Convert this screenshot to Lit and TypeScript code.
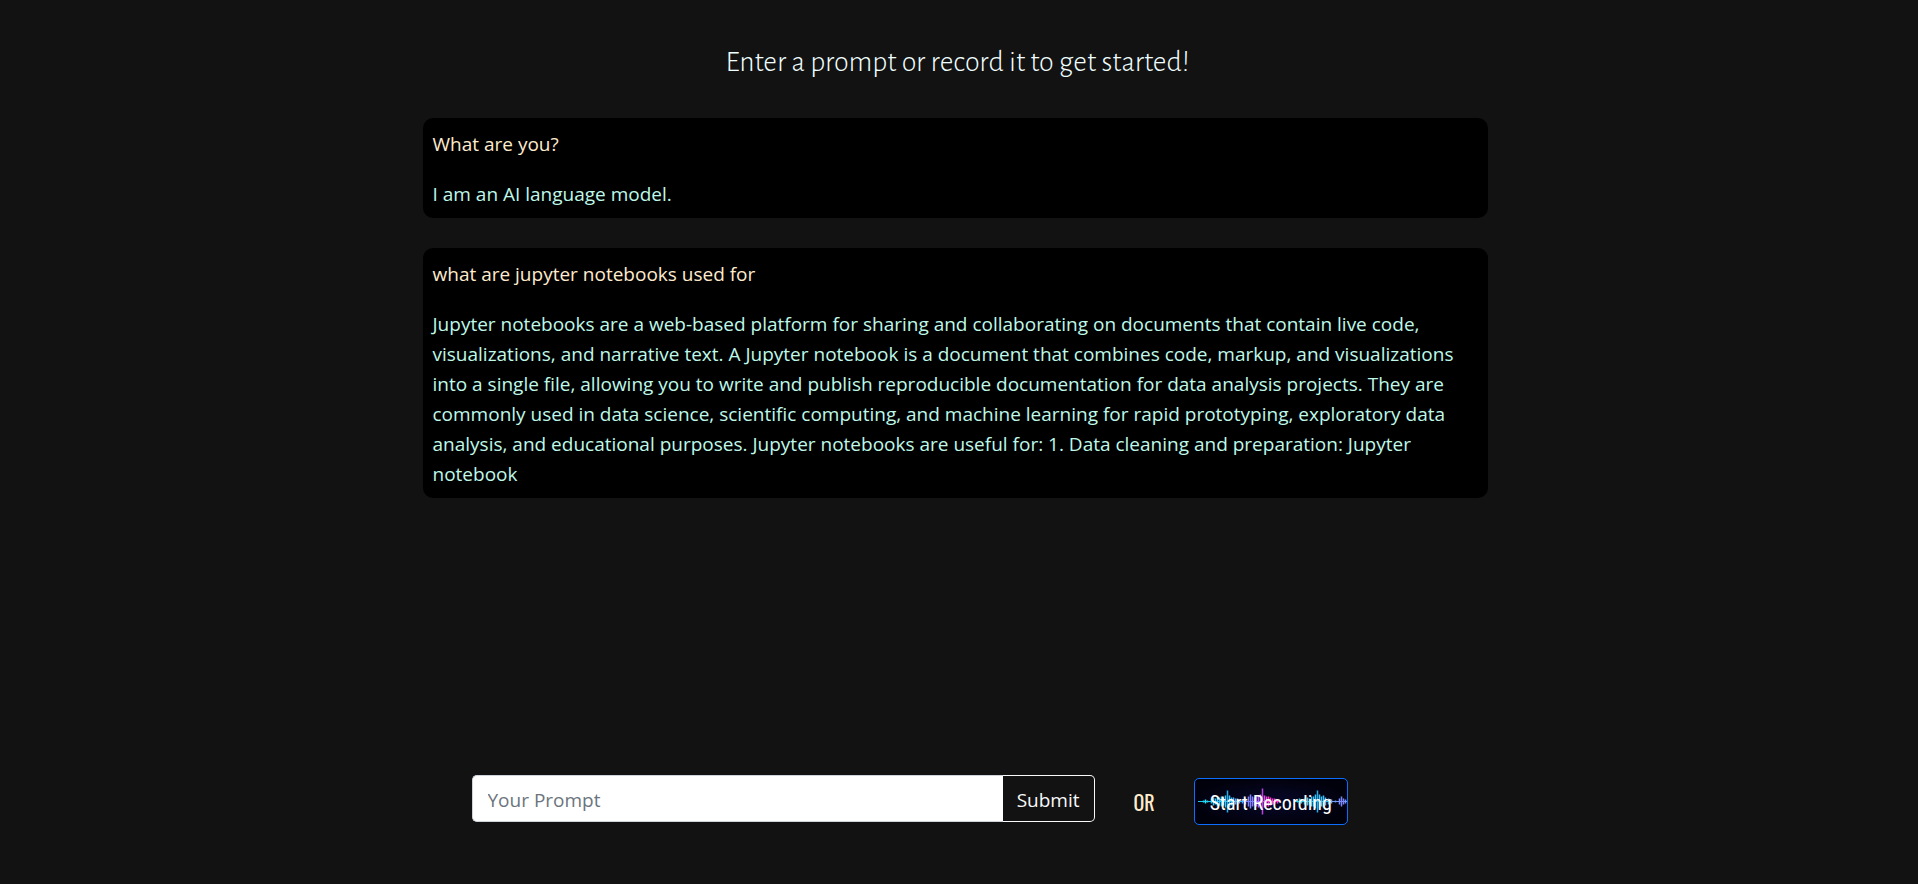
import { LitElement, html, svg, css } from "lit";
import { customElement, state } from "lit/decorators.js";

interface Exchange {
  prompt: string;
  reply: string;
}

/* Waveform bars: x position, half height, colour */
const WAVE: [number, number, string][] = [
  [9, 1, "#22d3ee"], [11, 2, "#22e5ff"], [13, 1, "#22d3ee"],
  [17, 2, "#22d3ee"], [19, 4, "#38c8ff"], [21, 3, "#38c8ff"], [23, 5, "#38c8ff"],
  [25, 4, "#2bc5ff"], [27, 5, "#38c8ff"], [29, 4, "#38c8ff"], [31, 6, "#38c8ff"],
  [33, 11, "#1fb0f0"], [35, 6, "#38c8ff"], [37, 4, "#38c8ff"], [39, 4, "#4ab8ff"],
  [41, 3, "#5aacff"], [43, 3, "#5aacff"], [45, 2, "#5aacff"], [48, 2, "#6d9cff"],
  [51, 3, "#6d8cff"], [54, 5, "#7d84ff"], [56, 7, "#7d84ff"], [58, 5, "#8a7cff"],
  [60, 4, "#9a74ff"], [62, 5, "#a86cff"], [64, 6, "#b064f8"], [66, 7, "#c95ff0"],
  [68, 13, "#b844e0"], [70, 6, "#e050e8"], [72, 5, "#f848d8"], [74, 5, "#ff38d0"],
  [76, 4, "#ff38d0"], [78, 3, "#ff38c8"], [80, 3, "#ff38c8"], [83, 2, "#ff38c8"],
  [103, 1, "#22d3ee"], [105, 3, "#22d3ee"], [107, 2, "#22d3ee"], [110, 3, "#38c8ff"],
  [113, 4, "#38c8ff"], [115, 3, "#38c8ff"], [117, 5, "#38c8ff"], [119, 5, "#38c8ff"],
  [121, 7, "#38c8ff"], [123, 11, "#1fb0f0"], [125, 7, "#38c8ff"], [127, 5, "#38c8ff"],
  [129, 6, "#38c8ff"], [131, 4, "#4ab8ff"], [134, 3, "#5aacff"], [137, 2, "#5aacff"],
  [141, 1, "#6d9cff"], [145, 3, "#7d94ff"], [147, 5, "#7d84ff"], [149, 3, "#7d84ff"],
  [151, 2, "#7d94ff"],
];

@customElement("app-root")
export class AppRoot extends LitElement {
  static styles = css`
    :host {
      display: flex;
      flex-direction: column;
      align-items: center;
      min-height: 100vh;
      box-sizing: border-box;
      padding: 41px 24px 59px 16px;
      background: #121212;
      color: #f5f5f5;
      font: 19px/30px "Segoe UI", "Open Sans", "Noto Sans", sans-serif;
    }
    h1 {
      margin: 0 0 35px;
      padding-left: 5px;
      font: 300 30px/42px "Alegreya Sans", Lato, sans-serif;
      text-align: center;
      color: #f0ffff;
    }
    .log {
      display: flex;
      flex-direction: column;
      gap: 30px;
      width: 100%;
      max-width: 1065px;
    }
    .card {
      display: grid;
      gap: 20px;
      padding: 11px 10px 9px;
      border-radius: 10px;
      background: #000;
    }
    .card p {
      margin: 0;
    }
    .prompt {
      color: #ffebcd;
    }
    .reply {
      color: #bff8e8;
    }
    .bar {
      display: flex;
      align-items: flex-end;
      gap: 39px;
      box-sizing: border-box;
      width: 100%;
      max-width: 1065px;
      margin-top: auto;
      padding-left: 49px;
    }
    form {
      display: flex;
      flex: 0 1 623px;
      margin-bottom: 3px;
    }
    input,
    button {
      box-sizing: border-box;
      height: 47px;
      font: inherit;
    }
    input {
      flex: 1;
      min-width: 0;
      padding: 8px 15px 6px;
      border: 1px solid #ced4da;
      border-right: 0;
      border-radius: 5px 0 0 5px;
      background: #fff;
      color: #212529;
    }
    input::placeholder {
      color: #6c757d;
      opacity: 1;
    }
    .submit {
      padding: 8px 14px 6px;
      border: 1px solid #f8f9fa;
      border-left: 0;
      border-radius: 0 5px 5px 0;
      background: #121212;
      color: #f8f9fa;
    }
    .or {
      font: 400 20px/46px Oswald, "Roboto Condensed", "Liberation Sans Narrow", sans-serif;
      color: #ffebcd;
    }
    .record {
      position: relative;
      overflow: hidden;
      padding: 2px 15px 0;
      border: 1px solid #0d6efd;
      border-radius: 5px;
      background: radial-gradient(ellipse at center, #08082a, #01010c 75%);
      color: #fff;
      font: 20px/30px "Roboto Condensed", "Liberation Sans Narrow", sans-serif;
    }
    .wave {
      position: absolute;
      inset: -1px;
      width: 154px;
      height: 47px;
    }
    .label {
      position: relative;
    }
  `;

  @state() private log: Exchange[] = [
    { prompt: "What are you?", reply: "I am an AI language model." },
    {
      prompt: "what are jupyter notebooks used for",
      reply:
        "Jupyter notebooks are a web-based platform for sharing and collaborating on documents that contain live code, visualizations, and narrative text. A Jupyter notebook is a document that combines code, markup, and visualizations into a single file, allowing you to write and publish reproducible documentation for data analysis projects. They are commonly used in data science, scientific computing, and machine learning for rapid prototyping, exploratory data analysis, and educational purposes. Jupyter notebooks are useful for: 1. Data cleaning and preparation: Jupyter notebook",
    },
  ];

  private wave() {
    return html`<svg class="wave" viewBox="0 0 154 47" aria-hidden="true">
      <path d="M4 23.5H50" stroke="#22c8ee" />
      <path d="M50 23.5H68" stroke="#7d84ff" />
      <path d="M68 23.5H86" stroke="#ff38c8" />
      <path d="M101 23.5H138" stroke="#22c8ee" />
      <path d="M138 23.5H154" stroke="#7d9cf0" />
      ${WAVE.map(
        ([x, h, c]) => svg`<path d=${`M${x + 0.5} ${23.5 - h}V${23.5 + h}`} stroke=${c} stroke-width="1.5" />`
      )}
    </svg>`;
  }

  render() {
    return html`
      <h1>Enter a prompt or record it to get started!</h1>
      <div class="log">
        ${this.log.map(
          (e) => html`<article class="card">
            <p class="prompt">${e.prompt}</p>
            <p class="reply">${e.reply}</p>
          </article>`
        )}
      </div>
      <div class="bar">
        <form @submit=${(ev: Event) => ev.preventDefault()}>
          <input type="text" aria-label="Your Prompt" placeholder="Your Prompt" />
          <button class="submit" type="submit">Submit</button>
        </form>
        <span class="or">OR</span>
        <button class="record" type="button">${this.wave()}<span class="label">Start Recording</span></button>
      </div>
    `;
  }
}
